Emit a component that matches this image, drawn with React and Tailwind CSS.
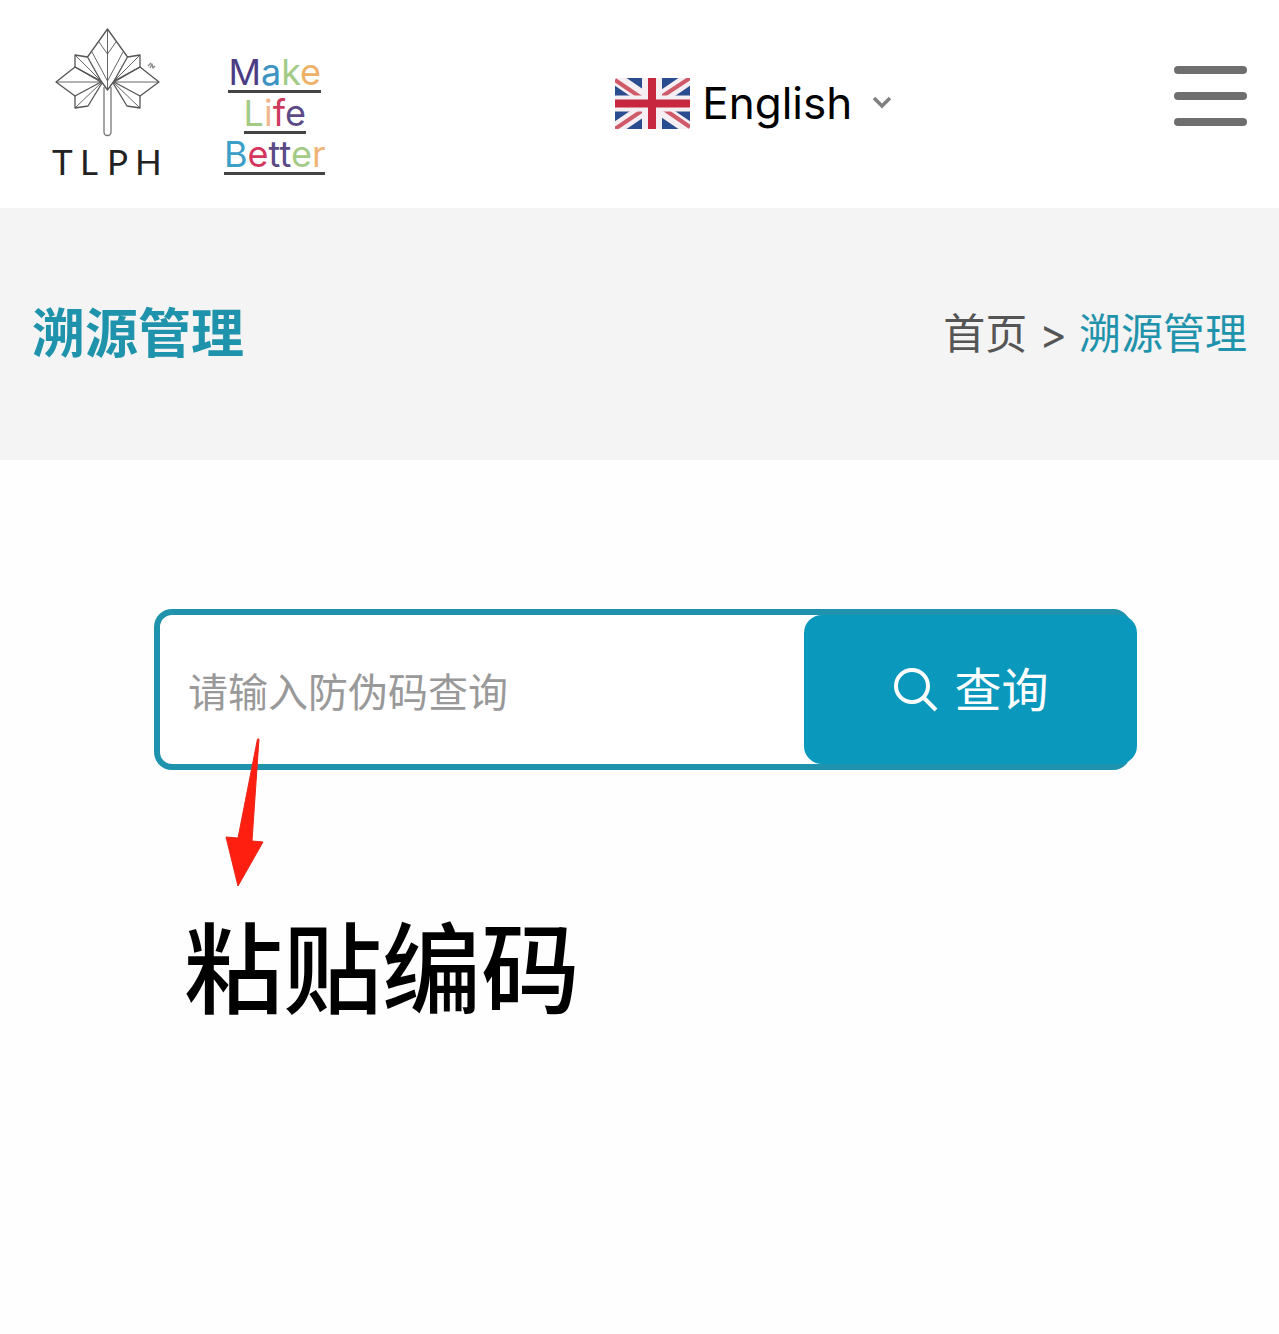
import React, { useState } from "react";

const slogan = [
  [
    ["M", "text-[#4b3c83]"],
    ["a", "text-[#3b93c4]"],
    ["k", "text-[#a3cb86]"],
    ["e", "text-[#edb268]"],
  ],
  [
    ["L", "text-[#a3cb86]"],
    ["i", "text-[#f0b890]"],
    ["f", "text-[#cf3a5c]"],
    ["e", "text-[#5c4a86]"],
  ],
  [
    ["B", "text-[#3b9fc8]"],
    ["e", "text-[#d6355c]"],
    ["t", "text-[#5c4a86]"],
    ["t", "text-[#5c4a86]"],
    ["e", "text-[#a3cb86]"],
    ["r", "text-[#f0b478]"],
  ],
];

const LeafLogo = () => (
  <svg width="120" height="160" viewBox="0 0 120 160" role="img" aria-label="TLPH">
    <g fill="none" stroke="#555" strokeWidth="1.3" strokeLinejoin="round">
      <path d="M59.500 4 L79.500 32 L66 56 L59.500 65 L53 56 L39.500 32 Z" />
      <path
        d="M59.500 4 V65 M51 17 L59.500 29 L68 17 M44 27 L59.500 56 L75 27"
        strokeWidth="0.9"
      />
      <path d="M39.500 32 L27 30 V42 L53 56" />
      <path d="M27 30 L53 56" strokeWidth="0.9" />
      <path d="M79.500 32 L92 30 V42 L66 56" />
      <path d="M92 30 L66 56" strokeWidth="0.9" />
      <path d="M27 42 L8 57 L27 71 L53 57 Z" />
      <path d="M8 57 H53" strokeWidth="0.9" />
      <path d="M92 42 L111 57 L92 71 L66 57 Z" />
      <path d="M111 57 H66" strokeWidth="0.9" />
      <path d="M27 71 V83 L40 81 L54 58" />
      <path d="M27 83 L53 58" strokeWidth="0.9" />
      <path d="M92 71 V83 L79 81 L65 58" />
      <path d="M92 83 L66 58" strokeWidth="0.9" />
      <path d="M56 62 V107 Q56 110.500 59.500 110.500 Q63 110.500 63 107 V62" stroke="#777" />
      <path d="M100 41 L103 38 M102 43 L104 39 L105 43 L107 41" stroke="#888" />
    </g>
    <text
      x="4 32 59 87"
      y="150"
      className="fill-[#222] font-[Lato,sans-serif] text-[35px]"
    >
      TLPH
    </text>
  </svg>
);

const UkFlag = () => (
  <svg width="75" height="51" viewBox="0 0 75 51" aria-hidden="true">
    <rect width="75" height="51" fill="#2a4d8f" />
    <path d="M0 0 L75 51 M75 0 L0 51" stroke="#f5eef2" strokeWidth="13" />
    <path d="M0 2 L37 27 M75 0 L37 25 M0 51 L37 26 M75 49 L37 23" stroke="#cf5a6a" strokeWidth="4" />
    <path d="M37 0 V51" stroke="#f5eef2" strokeWidth="20" />
    <path d="M0 25.500 H75" stroke="#f5eef2" strokeWidth="16" />
    <path d="M37 0 V51 M0 25.500 H75" stroke="#c8283f" strokeWidth="8" />
  </svg>
);

const Header = () => (
  <header className="flex h-[208px] items-start justify-between bg-white px-8">
    <a href="#" className="flex items-start gap-14 pl-4 pr-2 pt-[25px]">
      <LeafLogo />
      <span className="flex flex-col items-center gap-[3px] pt-[30px] font-[Inter,sans-serif] text-[36px] leading-[35px]">
        {slogan.map((word, i) => (
          <span key={i} className="border-b-3 border-[#444]">
            {word.map(([letter, color], j) => (
              <span key={j} className={color}>
                {letter}
              </span>
            ))}
          </span>
        ))}
      </span>
    </a>

    <div className="flex items-center pt-[76px]">
      <UkFlag />
      <select
        aria-label="Language"
        className="ml-3 appearance-none bg-transparent font-[Inter,sans-serif] text-[44px] leading-[54px] text-black outline-none"
      >
        <option>English</option>
      </select>
      <svg className="pointer-events-none ml-5" width="20" height="14" viewBox="0 0 20 14" aria-hidden="true">
        <path d="M2 2 L10 10 L18 2" fill="none" stroke="#808080" strokeWidth="3.500" />
      </svg>
    </div>

    <button type="button" aria-label="Menu" className="flex flex-col gap-[18px] pt-[66px]">
      <span className="h-2 w-[73px] rounded-full bg-[#6f6f6f]" />
      <span className="h-2 w-[73px] rounded-full bg-[#6f6f6f]" />
      <span className="h-2 w-[73px] rounded-full bg-[#6f6f6f]" />
    </button>
  </header>
);

const App = () => {
  const [code, setCode] = useState("");

  return (
    <div className="min-h-screen bg-[#fefefe] font-[Inter,'Noto_Sans_CJK_SC',sans-serif]">
      <Header />

      <section className="flex h-[252px] items-center justify-between bg-[#f4f4f4] px-8">
        <h1 className="text-[53px] font-bold leading-[64px] text-[#1f93ab]">溯源管理</h1>
        <nav className="flex items-center gap-3 text-[42px] leading-[64px] text-[#555]">
          <a href="#">首页</a>
          <span>&gt;</span>
          <a href="#" className="text-[#1f93ab]">
            溯源管理
          </a>
        </nav>
      </section>

      <main className="pl-[154px] pr-[148px] pt-[149px]">
        <div className="relative">
          <form
            onSubmit={(e) => e.preventDefault()}
            className="flex rounded-[18px] border-6 border-[#1f93ad] bg-white"
          >
            <input
              type="text"
              aria-label="防伪码"
              value={code}
              onChange={(e) => setCode(e.target.value)}
              placeholder="请输入防伪码查询"
              className="min-w-0 flex-1 bg-transparent px-7 font-['Noto_Sans_CJK_SC',sans-serif] text-[40px] text-[#333] outline-none placeholder:text-[#999]"
            />
            <button
              type="submit"
              className="-mr-3 flex h-[149px] w-[333px] items-center justify-center gap-4 rounded-[18px] bg-[#0a98bd] text-[47px] leading-[64px] text-white"
            >
              <svg width="46" height="46" viewBox="0 0 46 46" aria-hidden="true">
                <g fill="none" stroke="currentColor" strokeWidth="4">
                  <circle cx="19" cy="19" r="16" />
                  <path d="M30 30 L43 43" />
                </g>
              </svg>
              查询
            </button>
          </form>

          {/* flecha que sale del campo */}
          <svg
            className="pointer-events-none absolute left-[70px] top-[128px]"
            width="42"
            height="152"
            viewBox="0 0 42 152"
            aria-hidden="true"
          >
            <path
              d="M33.500 2 L35 2 L28 104 L39 105 L14 149 L2 100 L14 101 Z"
              fill="#ff1f10"
              stroke="#e8261a"
              strokeLinejoin="round"
            />
          </svg>
        </div>

        <p className="pl-[30px] pt-[128px] text-[99px] font-medium leading-[144px] text-black">粘贴编码</p>
      </main>
    </div>
  );
};

export default App;
